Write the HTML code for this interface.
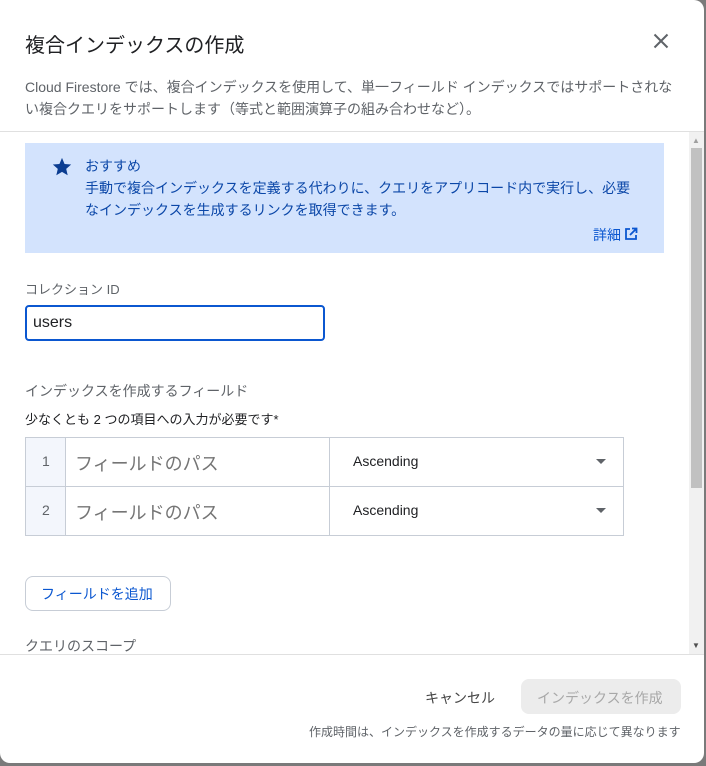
<!DOCTYPE html>
<html><head><meta charset="utf-8"><style>
*{box-sizing:border-box;margin:0;padding:0}
body{width:706px;height:766px;background:#7a7a7a;font-family:"Liberation Sans","Noto Sans CJK JP",sans-serif;position:relative;overflow:hidden}
.dlg{position:absolute;left:0;top:0;width:704px;height:763px;background:#fff;border-radius:0 10px 10px 10px;overflow:hidden}
.a{position:absolute;white-space:nowrap}
</style></head><body><div class="dlg">
<div class="a" style="left:25px;top:29px;font-size:20px;color:#202124">複合インデックスの作成</div>
<svg class="a" style="left:653px;top:33px" width="16" height="16" viewBox="0 0 16 16"><path d="M1.5 1.5L14.5 14.5M14.5 1.5L1.5 14.5" stroke="#5f6368" stroke-width="2"/></svg>
<div class="a" style="left:25px;top:76px;font-size:14px;color:#5f6368;line-height:22px">Cloud Firestore では、複合インデックスを使用して、単一フィールド インデックスではサポートされな<br>い複合クエリをサポートします（等式と範囲演算子の組み合わせなど）。</div>
<div class="a" style="left:0;top:131px;width:704px;height:1px;background:#e0e0e0"></div>
<div class="a" style="left:689px;top:132px;width:15px;height:522px;background:#f1f1f1"></div>
<div class="a" style="left:691px;top:148px;width:11px;height:340px;background:#c1c1c1"></div>
<div class="a" style="left:692px;top:136px;font-size:8px;color:#a0a0a0">▲</div>
<div class="a" style="left:692px;top:641px;font-size:8px;color:#505050">▼</div>
<div class="a" style="left:25px;top:143px;width:639px;height:110px;background:#d3e3fd"></div>
<svg class="a" style="left:51px;top:156px" width="22" height="22" viewBox="0 0 24 24"><path d="M12 17.3l6.2 3.7-1.6-7 5.4-4.7-7.2-.6L12 2 9.2 8.7 2 9.3l5.4 4.7-1.6 7z" fill="#0b3d91"/></svg>
<div class="a" style="left:85px;top:155px;font-size:14px;color:#0b47a8;line-height:22px">おすすめ<br>手動で複合インデックスを定義する代わりに、クエリをアプリコード内で実行し、必要<br>なインデックスを生成するリンクを取得できます。</div>
<div class="a" style="left:593px;top:225px;font-size:14px;color:#0b57d0">詳細</div>
<svg class="a" style="left:624px;top:227px" width="14" height="14" viewBox="0 0 14 14"><path d="M6 2H2v10h10V8M8 1.5h4.5V6M12.5 1.5L6 8" fill="none" stroke="#0b57d0" stroke-width="1.8"/></svg>
<div class="a" style="left:25px;top:279px;font-size:13px;color:#5f6368">コレクション ID</div>
<div class="a" style="left:25px;top:305px;width:300px;height:36px;border:2px solid #0b57d0;border-radius:4px"></div>
<div class="a" style="left:33px;top:314px;font-size:16px;color:#202124">users</div>
<div class="a" style="left:25px;top:381px;font-size:14px;color:#5f6368">インデックスを作成するフィールド</div>
<div class="a" style="left:25px;top:409px;font-size:13px;color:#202124">少なくとも 2 つの項目への入力が必要です*</div>
<div class="a" style="left:25px;top:437px;width:599px;height:99px;border:1px solid #c7cdd6"></div>
<div class="a" style="left:26px;top:438px;width:40px;height:97px;background:#f3f6fc;border-right:1px solid #c7cdd6"></div>
<div class="a" style="left:329px;top:438px;width:1px;height:97px;background:#c7cdd6"></div>
<div class="a" style="left:26px;top:486px;width:597px;height:1px;background:#c7cdd6"></div>
<div class="a" style="left:42px;top:453px;font-size:14px;color:#5f6368">1</div>
<div class="a" style="left:42px;top:502px;font-size:14px;color:#5f6368">2</div>
<div class="a" style="left:75px;top:450px;font-size:18px;color:#757575">フィールドのパス</div>
<div class="a" style="left:75px;top:499px;font-size:18px;color:#757575">フィールドのパス</div>
<div class="a" style="left:353px;top:453px;font-size:14px;color:#202124">Ascending</div>
<div class="a" style="left:353px;top:502px;font-size:14px;color:#202124">Ascending</div>
<div class="a" style="left:596px;top:459px;width:0;height:0;border:5px solid transparent;border-top-color:#5f6368"></div>
<div class="a" style="left:596px;top:508px;width:0;height:0;border:5px solid transparent;border-top-color:#5f6368"></div>
<div class="a" style="left:25px;top:576px;width:146px;height:35px;border:1px solid #c7cdd6;border-radius:8px"></div>
<div class="a" style="left:41px;top:584px;font-size:14px;color:#0b57d0">フィールドを追加</div>
<div class="a" style="left:25px;top:636px;font-size:14px;color:#5f6368">クエリのスコープ</div>
<div class="a" style="left:0;top:654px;width:704px;height:1px;background:#e0e0e0"></div>
<div class="a" style="left:425px;top:688px;font-size:14px;color:#444">キャンセル</div>
<div class="a" style="left:521px;top:679px;width:160px;height:35px;background:#ececec;border-radius:8px"></div>
<div class="a" style="left:537px;top:688px;font-size:14px;color:#a8a8a8">インデックスを作成</div>
<div class="a" style="left:309px;top:723px;font-size:12px;color:#5f6368">作成時間は、インデックスを作成するデータの量に応じて異なります</div>
</div></body></html>
